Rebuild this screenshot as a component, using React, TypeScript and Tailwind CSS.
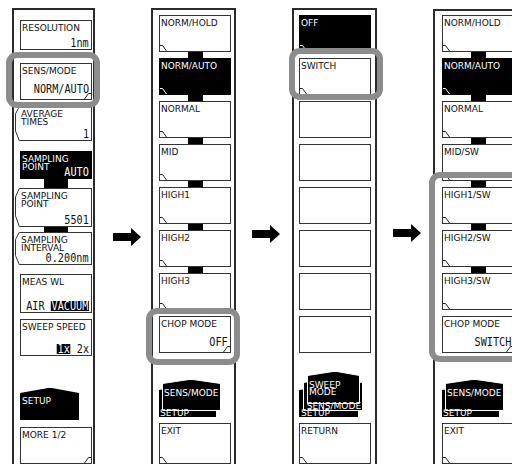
import React from "react";

type Corner = "bl" | "br";

type KeyProps = {
  label?: string[];
  value?: React.ReactNode;
  black?: boolean;
  corner?: Corner;
  bent?: boolean;
  h: string;
};

const LBL = "font-['DejaVu_Sans',sans-serif] text-[9px] leading-[8px]";

function Val({ children }: { children: React.ReactNode }) {
  return (
    <span className="inline-block origin-right scale-x-[0.85] whitespace-nowrap font-['DejaVu_Sans_Mono',monospace] text-[12px] leading-[9px]">
      {children}
    </span>
  );
}

function Inv({ children }: { children: React.ReactNode }) {
  return <span className="inline-block bg-black px-[1px] leading-[10px] text-white">{children}</span>;
}

// small "folded corner" mark in the bottom corner of a soft key
function Fold({ side, white }: { side: Corner; white?: boolean }) {
  return (
    <svg
      width="7"
      height="7"
      viewBox="0 0 7 7"
      className={`absolute bottom-0 ${side === "bl" ? "left-0" : "right-0"}`}
    >
      <polyline
        points={side === "bl" ? "0,1.5 2.5,1.5 6.5,7" : "7,1.5 4.5,1.5 0.5,7"}
        fill="none"
        stroke={white ? "#fff" : "#222"}
        strokeWidth="1"
      />
    </svg>
  );
}

// bent left edge of the numeric-entry keys
function Bend() {
  return (
    <svg
      viewBox="0 0 5 35"
      preserveAspectRatio="none"
      className="absolute -left-[5px] -top-[1px] h-[calc(100%+2px)] w-[5px]"
    >
      <polyline
        points="4.5,0 0.5,8 0.5,25 4.5,35"
        fill="none"
        stroke="#333"
        strokeWidth="1"
        vectorEffect="non-scaling-stroke"
      />
    </svg>
  );
}

function Key({ label = [], value, black, corner, bent, h }: KeyProps) {
  const tone = black ? "bg-black text-white border-black" : "bg-white text-[#111] border-[#333]";
  return (
    <div
      className={`relative w-[72px] shrink-0 ${h} ${tone} ${bent ? "border-y border-r" : "border"}`}
    >
      {bent && <Bend />}
      {label.length > 0 && (
        <div className={`${LBL} whitespace-pre pl-[1px] pt-[3px]`}>{label.join("\n")}</div>
      )}
      {value !== undefined && (
        <div
          className={`absolute right-[2px] flex items-end ${
            corner === "br" ? "bottom-[5px]" : "bottom-[1px]"
          }`}
        >
          {value}
        </div>
      )}
      {corner && <Fold side={corner} white={black} />}
    </div>
  );
}

function Gap({ h }: { h: string }) {
  return <div className={`shrink-0 ${h}`} />;
}

function Link({ h, w }: { h: string; w: string }) {
  return (
    <div className={`flex w-[72px] shrink-0 justify-center ${h}`}>
      <div className={`h-full bg-black ${w}`} />
    </div>
  );
}

function Frame({ className, children }: { className: string; children: React.ReactNode }) {
  return (
    <div className={`flex h-[456px] shrink-0 flex-col border-x-2 border-t-2 border-[#2b2b2b] ${className}`}>
      {children}
    </div>
  );
}

function Arrow({ className }: { className: string }) {
  return (
    <svg width="28" height="18" viewBox="0 0 28 18" className={`shrink-0 ${className}`}>
      <path d="M0 5H18V0L28 9L18 18V13H0Z" fill="#000" />
    </svg>
  );
}

const TXT = "absolute whitespace-pre font-['DejaVu_Sans',sans-serif] text-[9px] leading-[7px] text-white";

function SetupTab() {
  return (
    <div className="relative h-[34px] w-[72px] shrink-0">
      <svg width="72" height="34" className="absolute inset-0">
        <polygon points="0,7 28,2 32,2 59,7 59,34 0,34" fill="#000" />
      </svg>
      <span className={`${TXT} left-[2px] top-[12px]`}>SETUP</span>
    </div>
  );
}

function TwoTabs() {
  return (
    <div className="relative h-[48px] w-[72px] shrink-0">
      <svg width="72" height="48" className="absolute inset-0">
        <polygon points="0,20 27,16 31,16 57,20 57,47 0,47" fill="#000" />
        <polygon points="3.5,13.5 30,9.5 34,9.5 61.5,13.5 61.5,40.5 3.5,40.5" fill="#000" stroke="#fff" strokeWidth="1" />
      </svg>
      <span className={`${TXT} left-[5px] top-[20px]`}>SENS/MODE</span>
      <span className={`${TXT} left-[1px] top-[40px]`}>SETUP</span>
    </div>
  );
}

function ThreeTabs() {
  return (
    <div className="relative h-[48px] w-[72px] shrink-0">
      <svg width="72" height="48" className="absolute inset-0">
        <polygon points="0,20 27,16 31,16 59,20 59,47 0,47" fill="#000" />
        <polygon points="4.5,12.5 31,8.5 35,8.5 63.5,12.5 63.5,40.5 4.5,40.5" fill="#000" stroke="#fff" strokeWidth="1" />
        <polygon points="8.5,5.5 34,1.5 38,1.5 60.5,5.5 60.5,33.5 8.5,33.5" fill="#000" stroke="#fff" strokeWidth="1" />
      </svg>
      <span className={`${TXT} left-[10px] top-[12px]`}>{"SWEEP\nMODE"}</span>
      <span className={`${TXT} left-[2px] top-[33px]`}>{"  SENS/MODE\nSETUP"}</span>
    </div>
  );
}

type MenuKey = { label?: string; value?: string; black?: boolean; corner?: Corner };

// 8 keys at a 43px pitch; links = indices that get a black connector below
function KeyStack({ keys, links }: { keys: MenuKey[]; links: number[] }) {
  return (
    <>
      {keys.map((k, i) => (
        <React.Fragment key={i}>
          <Key
            label={k.label ? [k.label] : []}
            value={k.value ? <Val>{k.value}</Val> : undefined}
            black={k.black}
            corner={k.corner}
            h="h-[37px]"
          />
          {i < keys.length - 1 &&
            (links.includes(i) ? <Link h="h-[6px]" w="w-[15px]" /> : <Gap h="h-[6px]" />)}
        </React.Fragment>
      ))}
    </>
  );
}

const sensKeys: MenuKey[] = [
  { label: "NORM/HOLD", corner: "bl" },
  { label: "NORM/AUTO", black: true, corner: "bl" },
  { label: "NORMAL", corner: "bl" },
  { label: "MID", corner: "bl" },
  { label: "HIGH1", corner: "bl" },
  { label: "HIGH2", corner: "bl" },
  { label: "HIGH3", corner: "bl" },
  { label: "CHOP MODE", value: "OFF", corner: "br" },
];

const chopKeys: MenuKey[] = [
  { label: "OFF", black: true, corner: "bl" },
  { label: "SWITCH", corner: "bl" },
  {},
  {},
  {},
  {},
  {},
  {},
];

const swKeys: MenuKey[] = [
  { label: "NORM/HOLD", corner: "bl" },
  { label: "NORM/AUTO", black: true, corner: "bl" },
  { label: "NORMAL", corner: "bl" },
  { label: "MID/SW", corner: "bl" },
  { label: "HIGH1/SW", corner: "bl" },
  { label: "HIGH2/SW", corner: "bl" },
  { label: "HIGH3/SW", corner: "bl" },
  { label: "CHOP MODE", value: "SWITCH", corner: "br" },
];

const ring = "absolute border-[6px] border-[#8c8c8c] rounded-[11px]";

export default function App() {
  return (
    <div className="relative flex h-[464px] w-[512px] items-start overflow-hidden bg-white">
      {/* setup menu */}
      <Frame className="ml-[12px] mt-[8px] w-[83px] pl-[6px] pt-[10px]">
        <Key label={["RESOLUTION"]} value={<Val>1nm</Val>} h="h-[30px]" />
        <Gap h="h-[13px]" />
        <Key label={["SENS/MODE"]} value={<Val>NORM/AUTO</Val>} corner="br" h="h-[37px]" />
        <Gap h="h-[6px]" />
        <Key label={["AVERAGE", "TIMES"]} value={<Val>1</Val>} bent h="h-[35px]" />
        <Gap h="h-[10px]" />
        <Key label={["SAMPLING", "POINT"]} value={<Val>AUTO</Val>} black h="h-[28px]" />
        <Link h="h-[9px]" w="w-[24px]" />
        <Key label={["SAMPLING", "POINT"]} value={<Val>5501</Val>} bent h="h-[39px]" />
        <Link h="h-[5px]" w="w-[24px]" />
        <Key label={["SAMPLING", "INTERVAL"]} value={<Val>0.200nm</Val>} bent h="h-[33px]" />
        <Gap h="h-[9px]" />
        <Key
          label={["MEAS WL"]}
          value={
            <Val>
              AIR <Inv>VACUUM</Inv>
            </Val>
          }
          h="h-[39px]"
        />
        <Gap h="h-[6px]" />
        <Key
          label={["SWEEP SPEED"]}
          value={
            <Val>
              <Inv>1x</Inv> 2x
            </Val>
          }
          h="h-[37px]"
        />
        <Gap h="h-[30px]" />
        <SetupTab />
        <Gap h="h-[7px]" />
        <Key label={["MORE 1/2"]} corner="br" h="h-[37px]" />
      </Frame>

      <Arrow className="ml-[18px] mt-[228px]" />

      {/* sens/mode menu */}
      <Frame className="ml-[10px] mt-[8px] w-[85px] pl-[6px] pt-[5px]">
        <KeyStack keys={sensKeys} links={[0, 1, 2, 3, 4, 5]} />
        <Gap h="h-[17px]" />
        <TwoTabs />
        <Gap h="h-[5px]" />
        <Key label={["EXIT"]} corner="bl" h="h-[41px]" />
      </Frame>

      <Arrow className="ml-[16px] mt-[225px]" />

      {/* chop mode menu */}
      <Frame className="ml-[12px] mt-[8px] w-[85px] pl-[5px] pt-[5px]">
        <KeyStack keys={chopKeys} links={[]} />
        <Gap h="h-[17px]" />
        <ThreeTabs />
        <Gap h="h-[5px]" />
        <Key label={["RETURN"]} corner="bl" h="h-[41px]" />
      </Frame>

      <Arrow className="ml-[16px] mt-[224px]" />

      {/* sens/mode menu with chop switch */}
      <Frame className="ml-[12px] mt-[9px] w-[85px] pl-[7px] pt-[4px]">
        <KeyStack keys={swKeys} links={[0, 1, 2, 3, 4, 5]} />
        <Gap h="h-[17px]" />
        <TwoTabs />
        <Gap h="h-[5px]" />
        <Key label={["EXIT"]} corner="bl" h="h-[41px]" />
      </Frame>

      {/* highlight rings */}
      <div className={`${ring} left-[6px] top-[52px] h-[56px] w-[94px]`} />
      <div className={`${ring} left-[146px] top-[308px] h-[57px] w-[94px]`} />
      <div className={`${ring} left-[289px] top-[48px] h-[52px] w-[94px]`} />
      <div className={`${ring} left-[429px] top-[172px] h-[190px] w-[100px]`} />
    </div>
  );
}
